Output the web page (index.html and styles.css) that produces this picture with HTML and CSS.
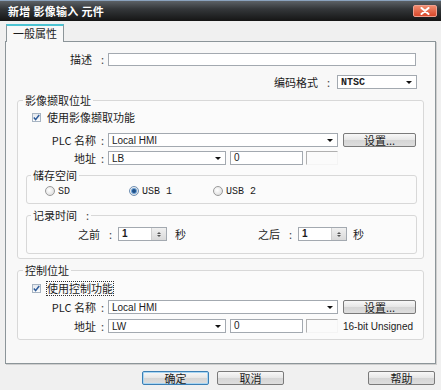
FILE: index.html
```html
<!DOCTYPE html>
<html lang="zh">
<head>
    <meta charset="UTF-8">
    <title>新增 影像输入 元件</title>
    <link rel="stylesheet" href="styles.css">
</head>
<body>
    <div class="dialog">
        <div class="titlebar">
            <span class="title">新增 影像输入 元件</span>
            <span class="close-btn">
                <svg width="10" height="8" viewBox="0 0 10 8"><path d="M1.5 1 L8.5 7 M8.5 1 L1.5 7" stroke="#fff" stroke-width="2" stroke-linecap="round"/></svg>
            </span>
        </div>

        <div class="tabs">
            <div class="tab">一般属性</div>
        </div>

        <div class="panel">
            <div class="row row-desc">
                <span class="lbl">描述<span class="colon wide">:</span></span>
                <div class="field field-desc"></div>
            </div>

            <div class="row row-enc">
                <span class="lbl-inline">编码格式<span class="colon wide">:</span></span>
                <div class="select select-enc"><span class="mono bold">NTSC</span><span class="arrow"></span></div>
            </div>

            <fieldset class="group group-capture">
                <legend>影像撷取位址</legend>
                <div class="check-row">
                    <span class="checkbox">
                        <svg width="7" height="7" viewBox="0 0 7 7"><path d="M0.8 3.6 L2.6 5.6 L6.2 1" fill="none" stroke="#2d5b9a" stroke-width="1.5"/></svg>
                    </span>
                    <span>使用影像撷取功能</span>
                </div>
                <div class="row row-plc">
                    <span class="lbl">PLC 名称<span class="colon">:</span></span>
                    <div class="select select-plc"><span class="latin">Local HMI</span><span class="arrow"></span></div>
                    <button class="btn btn-set">设置...</button>
                </div>
                <div class="row row-addr">
                    <span class="lbl">地址<span class="colon">:</span></span>
                    <div class="select select-addr"><span class="latin">LB</span><span class="arrow"></span></div>
                    <div class="field field-num latin">0</div>
                    <div class="sunken"></div>
                </div>

                <fieldset class="subgroup subgroup-store">
                    <legend>储存空间</legend>
                    <div class="radio-row">
                        <div class="radio-item"><span class="radio"></span><span class="mono">SD</span></div>
                        <div class="radio-item"><span class="radio on"><span class="dot"></span></span><span class="mono">USB 1</span></div>
                        <div class="radio-item"><span class="radio"></span><span class="mono">USB 2</span></div>
                    </div>
                </fieldset>

                <fieldset class="subgroup subgroup-time">
                    <legend>记录时间<span class="colon wide">:</span></legend>
                    <div class="time-row">
                        <div class="time-item time-before">
                            <span class="time-lbl">之前<span class="colon wide">:</span></span>
                            <div class="spin"><span class="spin-val">1</span><span class="spin-btns"><span class="up"></span><span class="down"></span></span></div>
                            <span class="unit">秒</span>
                        </div>
                        <div class="time-item time-after">
                            <span class="time-lbl">之后<span class="colon wide">:</span></span>
                            <div class="spin"><span class="spin-val">1</span><span class="spin-btns"><span class="up"></span><span class="down"></span></span></div>
                            <span class="unit">秒</span>
                        </div>
                    </div>
                </fieldset>
            </fieldset>

            <fieldset class="group group-control">
                <legend>控制位址</legend>
                <div class="check-row">
                    <span class="checkbox">
                        <svg width="7" height="7" viewBox="0 0 7 7"><path d="M0.8 3.6 L2.6 5.6 L6.2 1" fill="none" stroke="#2d5b9a" stroke-width="1.5"/></svg>
                    </span>
                    <span class="focused">使用控制功能</span>
                </div>
                <div class="row row-plc">
                    <span class="lbl">PLC 名称<span class="colon">:</span></span>
                    <div class="select select-plc"><span class="latin">Local HMI</span><span class="arrow"></span></div>
                    <button class="btn btn-set">设置...</button>
                </div>
                <div class="row row-addr">
                    <span class="lbl">地址<span class="colon">:</span></span>
                    <div class="select select-addr"><span class="latin">LW</span><span class="arrow"></span></div>
                    <div class="field field-num latin">0</div>
                    <div class="sunken"></div>
                    <span class="latin data-type">16-bit Unsigned</span>
                </div>
            </fieldset>
        </div>

        <div class="footer">
            <button class="btn btn-foot btn-default">确定</button>
            <button class="btn btn-foot">取消</button>
            <button class="btn btn-foot btn-help">帮助</button>
        </div>
    </div>
</body>
</html>
```

FILE: styles.css
```css
body {
    margin: 0;
    font-family: "Noto Sans CJK SC", "Liberation Sans", sans-serif;
    font-size: 11px;
    line-height: 13px;
    color: #1c1c1c;
    background-color: #f0f0f0;
}
.dialog {
    width: 441px;
    height: 390px;
    background-color: #f0f0f0;
    overflow: hidden;
}
.titlebar {
    height: 21px;
    box-sizing: border-box;
    display: flex;
    align-items: center;
    justify-content: space-between;
    padding: 0 4px 0 8px;
    border-top: 1px solid #8aa2bd;
    background: linear-gradient(#5c6166, #34373a 40%, #151515 100%);
}
.title {
    color: #fff;
    font-weight: bold;
    letter-spacing: 0.3px;
}
.close-btn {
    width: 24px;
    height: 12px;
    box-sizing: border-box;
    display: flex;
    align-items: center;
    justify-content: center;
    border: 1px solid #f0a090;
    border-radius: 2px;
    background: linear-gradient(#f08a6c, #d9492c);
}
.tabs {
    display: flex;
    height: 17px;
    padding: 3px 0 0 6px;
}
.tab {
    position: relative;
    width: 58px;
    height: 18px;
    box-sizing: border-box;
    border: 1px solid #8c9599;
    border-top: 2px solid #4cc3d2;
    border-bottom: none;
    background-color: #f8f8f8;
    text-align: center;
    line-height: 15px;
}
.panel {
    height: 323px;
    box-sizing: border-box;
    margin: 0 5px;
    padding: 0 11px;
    border: 1px solid #8c9599;
    background-color: #f8f8f8;
    box-shadow: 1px 1px 0 #cfcfcf;
}
.row {
    display: flex;
    align-items: center;
    height: 14px;
}
.lbl {
    flex: none;
    width: 86px;
    margin-right: 4px;
    text-align: right;
}
.colon {
    margin-left: 5px;
    color: #444;
}
.colon.wide {
    margin-left: 9px;
}
.row-desc {
    margin-top: 11px;
    height: 13px;
}
.row-desc .lbl {
    width: 87px;
}
.row-enc {
    margin-top: 9px;
    justify-content: flex-end;
    padding-right: 7px;
}
.lbl-inline {
    margin-right: 7px;
}
.field, .select {
    box-sizing: border-box;
    height: 14px;
    border: 1px solid #a3a9b0;
    background-color: #fff;
}
.field-desc {
    width: 308px;
    height: 13px;
}
.select {
    display: flex;
    align-items: center;
    justify-content: space-between;
    padding: 0 4px 0 3px;
}
.arrow {
    width: 0;
    height: 0;
    border-left: 3px solid transparent;
    border-right: 3px solid transparent;
    border-top: 3px solid #111;
}
.select-enc {
    width: 80px;
}
.select-plc {
    width: 230px;
}
.select-addr {
    width: 118px;
}
.mono {
    font-family: "Liberation Mono", monospace;
    font-size: 10px;
}
.bold {
    font-weight: bold;
}
.latin {
    font-family: "Liberation Sans", sans-serif;
    font-size: 10px;
}
.field-num {
    width: 73px;
    margin-left: 4px;
    padding-left: 3px;
    line-height: 12px;
}
.sunken {
    width: 32px;
    height: 14px;
    box-sizing: border-box;
    margin-left: 3px;
    border-top: 1px solid #b0b0b0;
    border-left: 1px solid #b0b0b0;
    border-right: 1px solid #f4f4f4;
    border-bottom: 1px solid #f4f4f4;
}
.data-type {
    margin-left: 5px;
}
.btn {
    box-sizing: border-box;
    height: 14px;
    padding: 0;
    border: 1px solid #7a7a7a;
    border-radius: 2px;
    background: linear-gradient(#f8f8f8, #e6e6e6 50%, #d5d5d5 51%, #dedede);
    font-family: "Noto Sans CJK SC", sans-serif;
    font-size: 11px;
    line-height: 12px;
    color: #1c1c1c;
}
.btn-set {
    width: 73px;
    margin-left: 5px;
}
fieldset {
    margin: 0;
    min-width: 0;
    border: 1px solid #d8d8d8;
    border-radius: 3px;
    background-color: #fbfbfb;
}
legend {
    padding: 0 2px;
    line-height: 13px;
}
.group {
    margin-top: 5px;
    padding: 4px 0 4px;
}
.group legend {
    margin-left: 5px;
}
.group-control {
    padding: 5px 0 6px;
}
.check-row {
    display: flex;
    align-items: center;
    height: 12px;
    padding-left: 14px;
}
.checkbox {
    width: 9px;
    height: 9px;
    box-sizing: border-box;
    display: flex;
    align-items: center;
    justify-content: center;
    margin-right: 6px;
    border: 1px solid #a7b4c2;
    background: linear-gradient(#e4e8ee, #fdfdfd);
}
.focused {
    outline: 1px dotted #333;
}
.group-capture .row-plc {
    margin-top: 10px;
}
.group-control .row-plc {
    margin-top: 6px;
}
.row-addr {
    margin-top: 4px;
}
.group-control .row-addr {
    margin-top: 5px;
}
.subgroup {
    margin: 4px 6px 0 8px;
    padding: 3px 0 6px;
}
.subgroup legend {
    margin-left: 4px;
}
.subgroup-time {
    margin-top: 5px;
    padding: 5px 0 12px;
}
.radio-row {
    display: flex;
    align-items: center;
    height: 12px;
    padding-left: 18px;
}
.radio-item {
    display: flex;
    align-items: center;
    width: 84px;
}
.radio {
    width: 10px;
    height: 10px;
    box-sizing: border-box;
    display: flex;
    align-items: center;
    justify-content: center;
    margin-right: 3px;
    border: 1px solid #9a9a9a;
    border-radius: 50%;
    background: radial-gradient(circle at 40% 40%, #fff, #d6d6d6);
}
.radio.on {
    border-color: #6f8fb3;
}
.dot {
    width: 4px;
    height: 4px;
    border-radius: 50%;
    background-color: #1f4f86;
    box-shadow: 0 0 0 1px #6aa0d6;
}
.time-row {
    display: flex;
    height: 14px;
}
.time-item {
    display: flex;
    align-items: center;
}
.time-lbl {
    text-align: right;
    margin-right: 6px;
}
.time-before .time-lbl {
    width: 85px;
}
.time-before {
    width: 173px;
}
.time-after .time-lbl {
    width: 92px;
}
.spin {
    display: flex;
    width: 49px;
    height: 14px;
    box-sizing: border-box;
    border: 1px solid #a3a9b0;
    background-color: #fff;
}
.spin-val {
    flex: 1;
    padding-left: 3px;
    font-family: "Liberation Sans", sans-serif;
    font-size: 10px;
    font-weight: bold;
    line-height: 12px;
}
.spin-btns {
    width: 14px;
    display: flex;
    flex-direction: column;
    align-items: center;
    justify-content: center;
    gap: 1px;
    border-left: 1px solid #cfcfcf;
    background: linear-gradient(#f0f0f0, #d9d9d9);
}
.up, .down {
    width: 0;
    height: 0;
    border-left: 2px solid transparent;
    border-right: 2px solid transparent;
}
.up {
    border-bottom: 2px solid #555;
}
.down {
    border-top: 2px solid #555;
}
.unit {
    margin-left: 8px;
}
.time-after .unit {
    margin-left: 6px;
}
.footer {
    display: flex;
    gap: 8px;
    padding: 7px 6px 0 142px;
}
.btn-foot {
    width: 67px;
}
.btn-default {
    border-color: #3b7fb5;
    box-shadow: inset 0 0 0 1px #a9d6f3;
}
.btn-help {
    margin-left: auto;
}
```
